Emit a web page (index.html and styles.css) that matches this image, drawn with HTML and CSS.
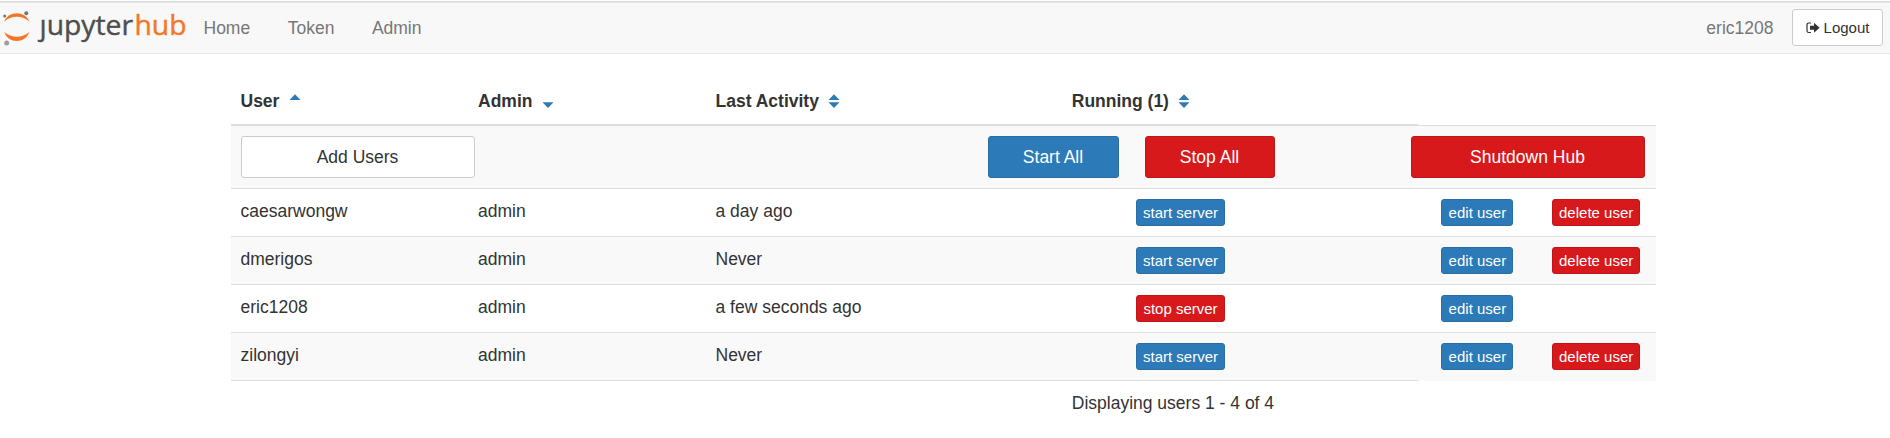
FILE: index.html
```html
<!DOCTYPE html>
<html lang="en">
<head>
<meta charset="utf-8">
<title>JupyterHub</title>
<link rel="stylesheet" href="styles.css">
</head>
<body>
<nav class="navbar">
  <a class="brand" href="#">
    <svg class="brand-logo" width="190" height="46" viewBox="0 0 190 46">
      <path d="M4.300 19.500C8 8.500 25.500 8.500 29.300 19.500C22.500 13.200 11 13.200 4.300 19.500Z" fill="#f37726"/>
      <path d="M4.300 30C8 42 25.500 42 29.300 30C22.500 36.400 11 36.400 4.300 30Z" fill="#f37726"/>
      <circle cx="26.300" cy="11.200" r="2" fill="#767677"/>
      <circle cx="4.700" cy="14" r="1.500" fill="#767677"/>
      <circle cx="6.700" cy="41" r="2.500" fill="#9e9e9e"/>
      <text class="brand-text" x="39.500" y="32.500" textLength="93.500" lengthAdjust="spacingAndGlyphs" fill="#4e4e4e" stroke="#4e4e4e">ȷupyter</text>
      <text class="brand-text" x="134.500" y="32.500" textLength="52" lengthAdjust="spacingAndGlyphs" fill="#f37726" stroke="#f37726">hub</text>
    </svg>
  </a>
  <div class="nav-links"><a href="#">Home</a><a href="#">Token</a><a href="#">Admin</a></div>
  <div class="nav-right">
    <span>eric1208</span>
    <a class="btn btn-default btn-logout" href="#"><svg class="icon" width="14" height="12" viewBox="0 0 14 12"><path d="M5 1H2.800A1.800 1.800 0 0 0 1 2.800V8.700A1.800 1.800 0 0 0 2.800 10.500H5" fill="none" stroke="#333" stroke-width="1.200"/><path d="M4 3.800H8V.8L13.600 5.800L8 10.800V7.800H4Z" fill="#333"/></svg>Logout</a>
  </div>
</nav>
<main class="container">
  <table class="users">
    <colgroup><col class="w2"><col class="w2"><col class="w3"><col class="w2"><col class="w1"><col class="w1"><col class="w1"></colgroup>
    <thead>
      <tr>
        <th>User<svg class="sort" width="12" height="18" viewBox="0 0 12 18"><path d="M.5 8L6 2.300L11.500 8Z"/></svg></th>
        <th>Admin<svg class="sort" width="12" height="18" viewBox="0 0 12 18"><path d="M.5 10.300L6 16L11.500 10.300Z"/></svg></th>
        <th>Last Activity<svg class="sort" width="12" height="18" viewBox="0 0 12 18"><path d="M.5 8L6 2.300L11.500 8ZM.5 10.300L6 16L11.500 10.300Z"/></svg></th>
        <th colspan="2">Running (1)<svg class="sort" width="12" height="18" viewBox="0 0 12 18"><path d="M.5 8L6 2.300L11.500 8ZM.5 10.300L6 16L11.500 10.300Z"/></svg></th>
        <td class="head-blank" colspan="2"></td>
      </tr>
    </thead>
    <tbody>
      <tr class="actions">
        <td colspan="7"><div class="action-bar">
          <a class="btn btn-default btn-wide">Add Users</a>
          <a class="btn btn-primary btn-start">Start All</a>
          <a class="btn btn-danger btn-stop">Stop All</a>
          <a class="btn btn-danger btn-wide btn-shutdown">Shutdown Hub</a>
        </div></td>
      </tr>
      <tr><td>caesarwongw</td><td>admin</td><td>a day ago</td><td class="center server"><a class="btn btn-xs btn-primary">start server</a></td><td></td><td class="center edit"><a class="btn btn-xs btn-primary">edit user</a></td><td class="center delete"><a class="btn btn-xs btn-danger">delete user</a></td></tr>
      <tr class="odd"><td>dmerigos</td><td>admin</td><td>Never</td><td class="center server"><a class="btn btn-xs btn-primary">start server</a></td><td></td><td class="center edit"><a class="btn btn-xs btn-primary">edit user</a></td><td class="center delete"><a class="btn btn-xs btn-danger">delete user</a></td></tr>
      <tr><td>eric1208</td><td>admin</td><td>a few seconds ago</td><td class="center server"><a class="btn btn-xs btn-danger">stop server</a></td><td></td><td class="center edit"><a class="btn btn-xs btn-primary">edit user</a></td><td></td></tr>
      <tr class="odd"><td>zilongyi</td><td>admin</td><td>Never</td><td class="center server"><a class="btn btn-xs btn-primary">start server</a></td><td></td><td class="center edit"><a class="btn btn-xs btn-primary">edit user</a></td><td class="center delete"><a class="btn btn-xs btn-danger">delete user</a></td></tr>
    </tbody>
    <tfoot>
      <tr><td colspan="3"></td><td colspan="2">Displaying users 1 - 4 of 4</td><td class="foot-blank" colspan="2"></td></tr>
    </tfoot>
  </table>
</main>
</body>
</html>
```

FILE: styles.css
```css
* { box-sizing: border-box; }
body {
  margin: 0;
  background: #fff;
  color: #333;
  font: 17.5px/25px "Liberation Sans", Arial, sans-serif;
}
a { color: inherit; text-decoration: none; }
.navbar {
  display: flex;
  height: 54px;
  padding: 2px 7px 0 0;
  background: linear-gradient(#fff 0 1px, #dadcdc 1px 2px, #e7e7e7 2px 3px, #f8f8f8 3px);
  border-bottom: 1px solid #e7e7e7;
  color: #777;
}
.brand { width: 190px; height: 46px; }
.brand-logo { display: block; }
.brand-text { font: 27px "Open Sans", "Noto Sans", sans-serif; stroke-width: .4px; }
.nav-links { display: flex; gap: 37.5px; padding: 14px 0 0 13.5px; }
.nav-right { display: flex; margin-left: auto; padding-top: 7px; gap: 18.5px; }
.nav-right span { padding-top: 7px; }
.btn {
  display: inline-block;
  border: 1px solid transparent;
  border-radius: 3px;
  text-align: center;
  white-space: nowrap;
}
.btn-default { background: #fff; border-color: #ccc; color: #333; }
.btn-primary { background: #2c7ab7; border-color: #286ea5; color: #fff; }
.btn-danger { background: #d7191c; border-color: #c01619; color: #fff; }
.btn-logout { width: 91px; height: 37px; font-size: 15px; line-height: 35px; }
.icon { margin-right: 4px; vertical-align: -1px; }
.container { width: 1425px; margin: 21px 0 0 230.5px; }
.users { width: 1425px; table-layout: fixed; border-spacing: 0; }
.w1 { width: 118.75px; }
.w2 { width: 237.5px; }
.w3 { width: 356.25px; }
th, td { padding: 10px; text-align: left; vertical-align: top; }
th { height: 51px; padding: 14px 10px 0; border-bottom: 2px solid #ddd; }
.head-blank { border-bottom: 1px solid #ddd; }
.sort { margin-left: 9.5px; vertical-align: -2.5px; fill: #2c7ab7; }
tbody td { padding: 10px 10px 0; }
tbody tr + tr td { height: 48px; border-top: 1px solid #ddd; }
.actions td { height: 62px; }
.actions, .odd { background: #f9f9f9; }
.action-bar { display: flex; }
.action-bar .btn { height: 42px; line-height: 40px; }
.btn-wide { width: 234px; }
.btn-start { width: 131px; margin-left: 513px; }
.btn-stop { width: 130px; margin-left: 26px; }
.btn-shutdown { margin-left: 136px; }
tbody td.center { padding: 10px 0 0; text-align: center; line-height: 0; }
.btn-xs { height: 27px; font-size: 15px; line-height: 25px; }
.server .btn { width: 89px; }
.edit .btn { width: 72px; }
.delete .btn { width: 88px; }
tfoot td { padding-bottom: 0; border-top: 1px solid #ddd; }
tfoot .foot-blank { border-top-color: #f9f9f9; }
```
